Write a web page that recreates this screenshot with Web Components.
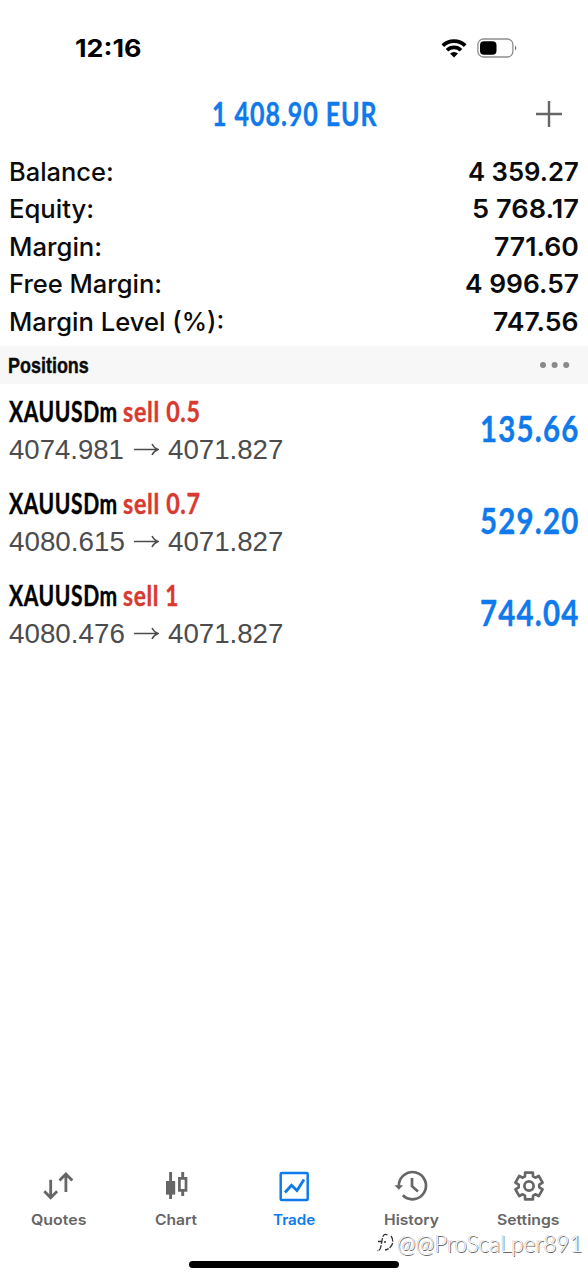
<!DOCTYPE html>
<html lang="en">
<head>
<meta charset="utf-8">
<meta name="viewport" content="width=device-width, initial-scale=1">
<title>Trade</title>
<style>
  html, body { margin: 0; background: #fff; }
  body { width: 588px; height: 1280px; overflow: hidden; }
</style>
</head>
<body>
<trade-app></trade-app>
<script>
// Text set to an exact width; the glyphs are condensed or widened to fill it.
class FitText extends HTMLElement {
  constructor() {
    super();
    this.attachShadow({ mode: 'open' });
    this.shadowRoot.innerHTML = `
      <style>
        :host { display: inline-block; white-space: nowrap; }
        span { display: inline-block; transform-origin: 0 50%; }
      </style>
      <span><slot></slot></span>
    `;
  }
  connectedCallback() {
    const width = Number(this.getAttribute('width'));
    const span = this.shadowRoot.querySelector('span');
    this.style.width = width + 'px';
    span.style.transform = `scaleX(${width / span.offsetWidth})`;
  }
}

class StatusBar extends HTMLElement {
  constructor() {
    super();
    this.attachShadow({ mode: 'open' });
    this.shadowRoot.innerHTML = `
      <style>
        :host {
          display: flex; justify-content: space-between; align-items: center;
          height: 80px; padding: 15px 71px 0 75px; box-sizing: border-box;
          font: 700 24px/30px Inter, sans-serif; color: #000;
        }
        fit-text { padding-top: 2px; }
        .icons { display: flex; align-items: center; gap: 10px; }
        svg { display: block; }
      </style>
      <fit-text width="66">12:16</fit-text>
      <div class="icons">
        <svg width="26" height="20" viewBox="0 0 26 20" fill="none" stroke="#000" stroke-width="3.7">
          <path d="M1.8 7.6a16 16 0 0 1 22.4 0"/>
          <path d="M6 12.2a10 10 0 0 1 14 0"/>
          <path d="M9 15.6a6 6 0 0 1 8 0L13 19.4z" fill="#000" stroke="none"/>
        </svg>
        <svg width="40" height="20" viewBox="0 0 40 20">
          <rect x=".9" y="1" width="35" height="18" rx="5.5" fill="#fff" stroke="#8d8d8d" stroke-width="1.3"/>
          <rect x="3" y="3.2" width="16.5" height="13.6" rx="4" fill="#000"/>
          <path d="M38 7.500c1.800 1 1.800 4 0 5z" fill="#777"/>
        </svg>
      </div>
    `;
  }
}

class AccountHeader extends HTMLElement {
  constructor() {
    super();
    this.attachShadow({ mode: 'open' });
    this.shadowRoot.innerHTML = `
      <style>
        :host {
          display: grid; grid-template-columns: 1fr auto 1fr; align-items: center;
          height: 68px; padding: 0 26px 0 28px;
          font: 700 31.5px/40px Lato, sans-serif; color: #0f7aeb;
          letter-spacing: 1.2px; -webkit-text-stroke: .4px currentColor;
        }
        fit-text { grid-column: 2; margin-top: -1px; }
        svg { justify-self: end; display: block; }
      </style>
      <fit-text width="166">1 408.90 EUR</fit-text>
      <svg width="26" height="26" viewBox="0 0 26 26" stroke="#666" stroke-width="2.4">
        <path d="M0 13h26M13 0v26"/>
      </svg>
    `;
  }
}

class AccountRow extends HTMLElement {
  constructor() {
    super();
    this.attachShadow({ mode: 'open' });
    this.shadowRoot.innerHTML = `
      <style>
        :host {
          display: flex; justify-content: space-between;
          height: 37.5px; padding: 0 9px;
          font: 540 25.7px/37.5px Inter, sans-serif; color: #0b0b0b;
        }
        .value { font-weight: 640; }
      </style>
      <slot></slot>
      <span class="value"><slot name="value"></slot></span>
    `;
  }
}

class SectionBar extends HTMLElement {
  constructor() {
    super();
    this.attachShadow({ mode: 'open' });
    this.shadowRoot.innerHTML = `
      <style>
        :host {
          display: flex; justify-content: space-between; align-items: center;
          height: 38px; padding: 0 18px 0 8px; background: #f7f7f7;
          font: 700 21.5px/38px "Liberation Sans", Arial, sans-serif; color: #0b0b0b;
          -webkit-text-stroke: .4px currentColor;
        }
        ::slotted(fit-text) { padding-top: 2px; }
        svg { display: block; }
      </style>
      <slot></slot>
      <svg width="31" height="8" viewBox="0 0 31 8" fill="#8a8a8a">
        <circle cx="4" cy="4" r="3"/><circle cx="15.6" cy="4" r="3"/><circle cx="27.2" cy="4" r="3"/>
      </svg>
    `;
  }
}

class PositionRow extends HTMLElement {
  constructor() {
    super();
    this.attachShadow({ mode: 'open' });
    const get = name => this.getAttribute(name);
    this.shadowRoot.innerHTML = `
      <style>
        :host {
          display: flex; justify-content: space-between; align-items: center;
          height: 92px; padding: 0 8px 0 8.5px; box-sizing: border-box;
          font-family: Lato, sans-serif; font-weight: 700;
        }
        .title {
          display: flex; gap: 5px; margin-top: -2px; padding-bottom: 1px;
          font-size: 28px; line-height: 38px; color: #000;
          letter-spacing: .8px; -webkit-text-stroke: .4px currentColor;
        }
        .side { color: #d83a30; }
        .prices {
          display: grid; grid-template-columns: 125px 34px auto; align-items: center;
          font: 400 27.3px/38px "Liberation Sans", Arial, sans-serif; color: #4c4c4e;
        }
        svg { display: block; }
        .profit {
          margin-top: -7px; font-size: 36.5px; line-height: 44px; color: #0f7aeb;
          letter-spacing: 1.5px; -webkit-text-stroke: .4px currentColor;
        }
      </style>
      <div>
        <div class="title">
          <fit-text width="109">${get('symbol')}</fit-text>
          <fit-text class="side" width="${get('side-width')}">${get('side')}</fit-text>
        </div>
        <div class="prices">
          <fit-text width="${get('open-width')}">${get('open')}</fit-text>
          <svg width="25" height="14" viewBox="0 0 25 14" fill="none" stroke="#4c4c4e" stroke-width="1.5">
            <path d="M0 6.500h24M18 1c1.500 3 3 4.500 6 5.500c-3 1-4.500 2.500-6 5.500"/>
          </svg>
          <fit-text width="115.5">${get('current')}</fit-text>
        </div>
      </div>
      <fit-text class="profit" width="100">${get('profit')}</fit-text>
    `;
  }
}

// Closed outline of a six-toothed gear centred on (cx, cy).
function gearPath(cx, cy) {
  const corners = [[-23, 10.4], [-16, 14], [16, 14], [23, 10.4]];
  const points = [];
  for (let tooth = 0; tooth < 6; tooth++) {
    for (const [offset, radius] of corners) {
      const angle = (tooth * 60 - 90 + offset) * Math.PI / 180;
      points.push((cx + radius * Math.cos(angle)).toFixed(2) + ' ' + (cy + radius * Math.sin(angle)).toFixed(2));
    }
  }
  return 'M' + points.join('L') + 'z';
}

const TAB_ICONS = {
  quotes: '<path d="M7.700 8.700v18M1.300 20.200l6.400 6.500l6.400-6.500M22.900 21v-18M16.500 9.500l6.400-6.500l6.400 6.500" stroke-width="2.800"/>',
  chart: '<path d="M10.600 1v27M22.700 1v24" stroke-width="2.900"/><path d="M6 10h9.200v13.600h-9.200z" fill="currentColor" stroke="none"/><path d="M19.400 7.400h6.600v12h-6.600z" fill="#fff" stroke-width="2.700"/>',
  trade: '<rect x="2.700" y="2" width="27" height="27" rx="1" stroke-width="2.500"/><path d="M7 21.500l6.500-7.200l5.500 5.200l7-11" stroke-width="2.800"/>',
  history: '<path d="M3.800 14.800a13.600 13.600 0 1 1 4 9.500" stroke-width="2.700"/><path d="M-.5 14.300h8.600l-4.300 4.500z" fill="currentColor" stroke="none"/><path d="M17 7v8.200l6 5.400" stroke-width="2.700"/>',
  settings: `<path d="${gearPath(16, 15)}" stroke-width="2.700" stroke-linejoin="round"/><circle cx="16" cy="15" r="4.600" stroke-width="2.700"/>`
};

class TabItem extends HTMLElement {
  constructor() {
    super();
    this.attachShadow({ mode: 'open' });
    this.shadowRoot.innerHTML = `
      <style>
        :host {
          display: flex; flex-direction: column; align-items: center; gap: 7px;
          font: 640 14.5px/20px Inter, sans-serif; color: #666;
        }
        :host([active]) { color: #0f7aeb; }
        svg { display: block; fill: none; stroke: currentColor; overflow: visible; }
      </style>
      <svg width="32" height="32" viewBox="0 0 32 32">${TAB_ICONS[this.getAttribute('icon')]}</svg>
      <slot></slot>
    `;
  }
}

class TabBar extends HTMLElement {
  constructor() {
    super();
    this.attachShadow({ mode: 'open' });
    this.shadowRoot.innerHTML = `
      <style>
        :host { display: block; height: 109px; }
        nav { display: grid; grid-template-columns: repeat(5, 1fr); height: 90px; padding-right: .5px; }
        .home { width: 210px; height: 7px; margin: 0 auto; border-radius: 4px; background: #000; }
      </style>
      <nav><slot></slot></nav>
      <div class="home"></div>
    `;
  }
}

// Author mark laid over the bottom right corner.
class AuthorMark extends HTMLElement {
  constructor() {
    super();
    this.attachShadow({ mode: 'open' });
    this.shadowRoot.innerHTML = `
      <style>
        :host {
          position: absolute; right: 5px; top: 1229px;
          display: flex; align-items: center; gap: 3px;
          font: 300 23.5px/28px Lato, sans-serif; color: #fff;
          text-shadow: .8px .8px 0 #666, -.3px -.5px 0 #999;
        }
        svg { display: block; fill: none; }
      </style>
      <svg width="18" height="22" viewBox="0 0 18 22" stroke="#333" stroke-width="1.300">
        <path d="M11.500 3c-3-1.500-4.500 0-5 3l-1.500 8c-.5 3-1.500 5-4 4.500M2 9.500h4M8 10h2M15 4c4 5 1 13-6 14" stroke-dasharray="6 1.200"/>
      </svg>
      <fit-text width="186"><slot></slot></fit-text>
    `;
  }
}

class TradeApp extends HTMLElement {
  constructor() {
    super();
    this.attachShadow({ mode: 'open' });
    this.shadowRoot.innerHTML = `
      <style>
        :host {
          display: flex; flex-direction: column; position: relative;
          width: 588px; height: 1280px; background: #fff; overflow: hidden;
        }
        .account { padding-top: 4.5px; height: 193.5px; }
        main { flex: 1; padding-top: 1px; }
      </style>
      <status-bar></status-bar>
      <account-header></account-header>
      <div class="account">
        <account-row><fit-text width="105">Balance:</fit-text><fit-text slot="value" width="111">4 359.27</fit-text></account-row>
        <account-row><fit-text width="85">Equity:</fit-text><fit-text slot="value" width="107">5 768.17</fit-text></account-row>
        <account-row><fit-text width="93">Margin:</fit-text><fit-text slot="value" width="85">771.60</fit-text></account-row>
        <account-row><fit-text width="153">Free Margin:</fit-text><fit-text slot="value" width="114">4 996.57</fit-text></account-row>
        <account-row><fit-text width="215">Margin Level (%):</fit-text><fit-text slot="value" width="86">747.56</fit-text></account-row>
      </div>
      <section-bar><fit-text width="81">Positions</fit-text></section-bar>
      <main>
        <position-row symbol="XAUUSDm" side="sell 0.5" side-width="78" open="4074.981" open-width="115" current="4071.827" profit="135.66"></position-row>
        <position-row symbol="XAUUSDm" side="sell 0.7" side-width="78" open="4080.615" open-width="116" current="4071.827" profit="529.20"></position-row>
        <position-row symbol="XAUUSDm" side="sell 1" side-width="56" open="4080.476" open-width="116" current="4071.827" profit="744.04"></position-row>
      </main>
      <tab-bar>
        <tab-item icon="quotes"><fit-text width="55">Quotes</fit-text></tab-item>
        <tab-item icon="chart"><fit-text width="42">Chart</fit-text></tab-item>
        <tab-item icon="trade" active><fit-text width="42">Trade</fit-text></tab-item>
        <tab-item icon="history"><fit-text width="55">History</fit-text></tab-item>
        <tab-item icon="settings"><fit-text width="63">Settings</fit-text></tab-item>
      </tab-bar>
      <author-mark>@@ProScaLper891</author-mark>
    `;
  }
}

customElements.define('fit-text', FitText);
customElements.define('status-bar', StatusBar);
customElements.define('account-header', AccountHeader);
customElements.define('account-row', AccountRow);
customElements.define('section-bar', SectionBar);
customElements.define('position-row', PositionRow);
customElements.define('tab-item', TabItem);
customElements.define('tab-bar', TabBar);
customElements.define('author-mark', AuthorMark);
customElements.define('trade-app', TradeApp);
</script>
</body>
</html>
